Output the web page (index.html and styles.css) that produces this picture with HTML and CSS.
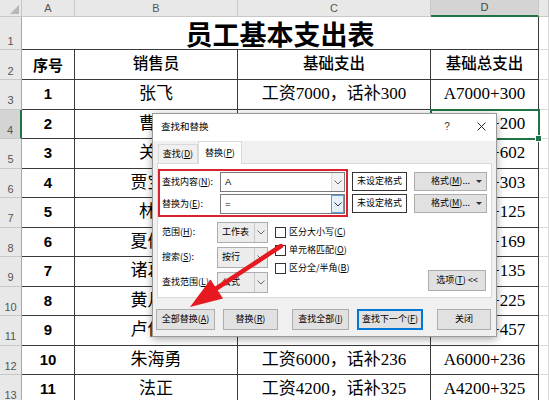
FILE: index.html
```html
<!DOCTYPE html>
<html lang="zh-CN">
<head>
<meta charset="utf-8">
<title>查找和替换</title>
<link rel="stylesheet" href="styles.css">
</head>
<body>
<div class="sheet">
  <div class="c hd corner"><span class="corner-tri"></span></div>
  <div class="c hd colh">A</div>
  <div class="c hd colh">B</div>
  <div class="c hd colh">C</div>
  <div class="c hd colh colsel">D</div>
  <div class="c hd colh"></div>

  <div class="c hd rowh">1</div>
  <div class="c title">员工基本支出表</div>
  <div class="c"></div>

  <div class="c hd rowh">2</div>
  <div class="c t num head">序号</div>
  <div class="c t txt head">销售员</div>
  <div class="c t txt head">基础支出</div>
  <div class="c t txt head">基础总支出</div>
  <div class="c"></div>

  <div class="c hd rowh">3</div>
  <div class="c t num">1</div>
  <div class="c t name">张飞</div>
  <div class="c t txt">工资7000，话补300</div>
  <div class="c t txt">A7000+300</div>
  <div class="c"></div>

  <div class="c hd rowh rowsel">4</div>
  <div class="c t num">2</div>
  <div class="c t name">曹操</div>
  <div class="c t txt">工资5000，话补200</div>
  <div class="c t txt cellsel">A5000+200</div>
  <div class="c"></div>

  <div class="c hd rowh">5</div>
  <div class="c t num">3</div>
  <div class="c t name">关羽</div>
  <div class="c t txt">工资6000，话补602</div>
  <div class="c t txt">A6000+602</div>
  <div class="c"></div>

  <div class="c hd rowh">6</div>
  <div class="c t num">4</div>
  <div class="c t name">贾宝玉</div>
  <div class="c t txt">工资4500，话补303</div>
  <div class="c t txt">A4500+303</div>
  <div class="c"></div>

  <div class="c hd rowh">7</div>
  <div class="c t num">5</div>
  <div class="c t name">林冲</div>
  <div class="c t txt">工资5500，话补125</div>
  <div class="c t txt">A5500+125</div>
  <div class="c"></div>

  <div class="c hd rowh">8</div>
  <div class="c t num">6</div>
  <div class="c t name">夏侯惇</div>
  <div class="c t txt">工资7200，话补169</div>
  <div class="c t txt">A7200+169</div>
  <div class="c"></div>

  <div class="c hd rowh">9</div>
  <div class="c t num">7</div>
  <div class="c t name">诸葛亮</div>
  <div class="c t txt">工资8000，话补135</div>
  <div class="c t txt">A8000+135</div>
  <div class="c"></div>

  <div class="c hd rowh">10</div>
  <div class="c t num">8</div>
  <div class="c t name">黄月英</div>
  <div class="c t txt">工资6500，话补225</div>
  <div class="c t txt">A6500+225</div>
  <div class="c"></div>

  <div class="c hd rowh">11</div>
  <div class="c t num">9</div>
  <div class="c t name">卢俊义</div>
  <div class="c t txt">工资5800，话补457</div>
  <div class="c t txt">A5800+457</div>
  <div class="c"></div>

  <div class="c hd rowh">12</div>
  <div class="c t num">10</div>
  <div class="c t name">朱海勇</div>
  <div class="c t txt">工资6000，话补236</div>
  <div class="c t txt">A6000+236</div>
  <div class="c"></div>

  <div class="c hd rowh">13</div>
  <div class="c t num">11</div>
  <div class="c t name">法正</div>
  <div class="c t txt">工资4200，话补325</div>
  <div class="c t txt">A4200+325</div>
  <div class="c"></div>
</div>

<div class="dialog">
  <div class="dlg-title">
    <span class="dlg-name">查找和替换</span>
    <span class="dlg-help">?</span>
    <span class="dlg-close"><svg width="9" height="9" viewBox="0 0 9 9"><path d="M0.5 0.5 L8.5 8.5 M8.5 0.5 L0.5 8.5" stroke="#222" stroke-width="1" fill="none"/></svg></span>
  </div>
  <div class="tabs">
    <span class="tab">查找(<u>D</u>)</span>
    <span class="tab active">替换(<u>P</u>)</span>
  </div>
  <div class="panel">
    <div class="find-row">
      <div class="redbox">
        <div class="field">
          <span class="lbl">查找内容(<u>N</u>):</span>
          <div class="combo"><span class="combo-val">A</span><span class="combo-arrow"><svg width="8" height="5" viewBox="0 0 8 5"><path d="M0.5 0.5 L4 4 L7.5 0.5" fill="none" stroke="#666" stroke-width="1"/></svg></span></div>
        </div>
        <div class="field">
          <span class="lbl">替换为(<u>E</u>):</span>
          <div class="combo"><span class="combo-val">=</span><span class="combo-arrow hot"><svg width="8" height="5" viewBox="0 0 8 5"><path d="M0.5 0.5 L4 4 L7.5 0.5" fill="none" stroke="#333" stroke-width="1"/></svg></span></div>
        </div>
      </div>
      <div class="fmt-col">
        <div class="fmt-box">未设定格式</div>
        <div class="fmt-box">未设定格式</div>
      </div>
      <div class="fmt-col">
        <div class="btn fmt-btn">格式(<u>M</u>)...<span class="tri"></span></div>
        <div class="btn fmt-btn">格式(<u>M</u>)...<span class="tri"></span></div>
      </div>
    </div>
    <div class="opt-row">
      <div class="sel-col">
        <div class="sel-row"><span class="lbl2">范围(<u>H</u>):</span><div class="select"><span class="sel-val">工作表</span><span class="sel-arrow"><svg width="8" height="5" viewBox="0 0 8 5"><path d="M0.5 0.5 L4 4 L7.5 0.5" fill="none" stroke="#666" stroke-width="1"/></svg></span></div></div>
        <div class="sel-row"><span class="lbl2">搜索(<u>S</u>):</span><div class="select"><span class="sel-val">按行</span><span class="sel-arrow"><svg width="8" height="5" viewBox="0 0 8 5"><path d="M0.5 0.5 L4 4 L7.5 0.5" fill="none" stroke="#666" stroke-width="1"/></svg></span></div></div>
        <div class="sel-row"><span class="lbl2">查找范围(<u>L</u>):</span><div class="select"><span class="sel-val">公式</span><span class="sel-arrow"><svg width="8" height="5" viewBox="0 0 8 5"><path d="M0.5 0.5 L4 4 L7.5 0.5" fill="none" stroke="#666" stroke-width="1"/></svg></span></div></div>
      </div>
      <div class="chk-col">
        <div class="chk"><span class="box"></span>区分大小写(<u>C</u>)</div>
        <div class="chk"><span class="box"></span>单元格匹配(<u>O</u>)</div>
        <div class="chk"><span class="box"></span>区分全/半角(<u>B</u>)</div>
      </div>
      <div class="btn opt-btn">选项(<u>T</u>) &lt;&lt;</div>
    </div>
  </div>
  <div class="actions">
    <div class="btn act w59">全部替换(<u>A</u>)</div>
    <div class="btn act w55">替换(<u>R</u>)</div>
    <div class="btn act w57 wide-gap">查找全部(<u>I</u>)</div>
    <div class="btn act w66 focus">查找下一个(<u>F</u>)</div>
    <div class="btn act w54 wide-gap">关闭</div>
  </div>
</div>

<svg class="arrow" width="549" height="400" viewBox="0 0 549 400">
  <path d="M281 246 L214 290" stroke="#e5191f" stroke-width="4.5" stroke-linecap="round" fill="none"/>
  <polygon points="190,307 210.5,279.5 223,298.5" fill="#e5191f"/>
</svg>
</body>
</html>
```

FILE: styles.css
```css
* { box-sizing: border-box; }
html, body { margin: 0; padding: 0; }
body {
  width: 549px;
  height: 400px;
  overflow: hidden;
  background: #fff;
  position: relative;
  font-family: "Noto Sans CJK SC", sans-serif;
}

/* ---------- spreadsheet ---------- */
.sheet {
  display: grid;
  grid-template-columns: 22px 53px 163px 193px 108px 10px;
  grid-template-rows: 17px 33px 30px repeat(11, 29.5px);
  height: 400px;
  overflow: hidden;
}
.c {
  position: relative;
  display: flex;
  align-items: center;
  justify-content: center;
  white-space: nowrap;
  overflow: hidden;
  line-height: 1.2;
  border-right: 1px solid #d9d9d9;
  border-bottom: 1px solid #d9d9d9;
  color: #000;
}
.hd {
  background: #e8e8e8;
  border-right: 1px solid #c8c8c8;
  border-bottom: 1px solid #c8c8c8;
  color: #555;
  font-family: "Liberation Sans", sans-serif;
  font-size: 11px;
}
.corner { justify-content: flex-end; align-items: flex-end; padding: 0 2px 2px 0; }
.corner-tri {
  width: 0; height: 0;
  border-left: 9px solid transparent;
  border-bottom: 9px solid #b8b8b8;
}
.colh { align-items: flex-end; padding-bottom: 1px; }
.colsel {
  background: #d4d4d4;
  border-bottom: 2px solid #217346;
  color: #444;
}
.rowh {
  align-items: flex-end;
  padding-bottom: 1px;
  border-right-color: #a8a8a8;
  font-size: 11px;
}
.rowsel {
  background: #d4d4d4;
  border-right: 2px solid #217346;
}
.title {
  grid-column: span 4;
  font-size: 27px;
  line-height: 1;
  font-weight: bold;
  overflow: visible;
  border-right: 1px solid #3a3a3a;
  border-bottom: 1px solid #3a3a3a;
  padding-top: 1px;
}
.t {
  border-right: 1px solid #3a3a3a;
  border-bottom: 1px solid #3a3a3a;
}
.num {
  font-family: "Liberation Sans", "Noto Sans CJK SC", sans-serif;
  font-weight: bold;
  font-size: 15px;
}
.num.head { font-family: "Noto Sans CJK SC", sans-serif; font-size: 15px; }
.name {
  font-family: "Liberation Serif", "Noto Sans CJK SC", serif;
  font-size: 17px;
}
.txt {
  font-family: "Liberation Serif", "Noto Sans CJK SC", serif;
  font-size: 17px;
}
.txt.head { font-size: 15.5px; font-weight: 500; }
.cellsel {
  outline: 2px solid #217346;
  outline-offset: -1px;
  z-index: 1;
  overflow: visible;
}
.cellsel::after {
  content: "";
  position: absolute;
  right: -4px;
  bottom: -4px;
  width: 5px;
  height: 5px;
  background: #217346;
  border: 1px solid #fff;
}

/* ---------- dialog ---------- */
.dialog {
  position: absolute;
  left: 152px;
  top: 113px;
  width: 345px;
  height: 224px;
  background: #f0f0f0;
  border: 1px solid #9a9a9a;
  box-shadow: 0 2px 8px rgba(0,0,0,0.35);
  font-size: 9px;
  line-height: 1.2;
  color: #000;
  z-index: 5;
  display: flex;
  flex-direction: column;
}
.dialog u { text-decoration: underline; text-underline-offset: 1px; }
.dlg-title {
  height: 27px;
  background: #fff;
  display: flex;
  align-items: center;
  padding: 0 10px 2px 8px;
  font-size: 9.5px;
}
.dlg-name { flex: 1; }
.dlg-help { width: 10px; margin-right: 25px; text-align: center; font-family: "Liberation Sans", sans-serif; font-size: 10px; color: #333; }
.dlg-close { display: flex; }

.tabs {
  height: 22px;
  display: flex;
  align-items: flex-end;
  padding-left: 5px;
  position: relative;
  z-index: 2;
}
.tab {
  height: 19px;
  display: flex;
  align-items: center;
  justify-content: center;
  white-space: nowrap;
  width: 40px;
  border: 1px solid #d9d9d9;
  border-bottom: none;
  background: #f0f0f0;
}
.tab.active {
  height: 23px;
  width: 44px;
  margin-bottom: -1px;
  background: #fff;
  border-color: #d9d9d9;
}

.panel {
  margin: 0 4px 0 4px;
  height: 135px;
  background: #fff;
  border: 1px solid #d9d9d9;
  padding: 5px 0 4px 0;
}
.find-row { display: flex; align-items: flex-start; }
.redbox {
  width: 190px;
  border: 2px solid #d9232e;
  padding: 1px 1px 1px 2px;
  display: flex;
  flex-direction: column;
  gap: 2px;
}
.field { display: flex; align-items: center; height: 20px; white-space: nowrap; }
.lbl { width: 58px; }
.combo {
  width: 125px;
  height: 20px;
  border: 1px solid #7a7a7a;
  display: flex;
  background: #fff;
}
.combo-val { flex: 1; padding-left: 4px; display: flex; align-items: center; font-size: 9.5px; font-family: "Liberation Sans", sans-serif; }
.combo-arrow {
  width: 13px;
  display: flex;
  align-items: center;
  justify-content: center;
  background: #f2f2f2;
  border-left: 1px solid #dcdcdc;
}
.combo-arrow.hot { background: #e5f1fb; border: 1px solid #569de5; }

.fmt-col {
  display: flex;
  flex-direction: column;
  gap: 3px;
  padding-top: 3px;
  margin-left: 4px;
}
.fmt-col + .fmt-col { margin-left: 7px; }
.fmt-box {
  width: 55px;
  height: 19px;
  border: 1px solid #333;
  background: #fff;
  display: flex;
  align-items: center;
  justify-content: center;
  white-space: nowrap;
}
.btn {
  background: #e1e1e1;
  border: 1px solid #adadad;
  display: flex;
  align-items: center;
  justify-content: center;
  white-space: nowrap;
}
.fmt-btn {
  width: 73px;
  height: 19px;
  justify-content: flex-start;
  padding-left: 16px;
}
.tri {
  margin-left: auto;
  margin-right: 4px;
  width: 0; height: 0;
  border-left: 3px solid transparent;
  border-right: 3px solid transparent;
  border-top: 3px solid #333;
}

.opt-row {
  display: flex;
  margin-top: 5px;
  height: 71px;
}
.sel-col {
  display: flex;
  flex-direction: column;
  gap: 4px;
  padding-left: 4px;
}
.sel-row { display: flex; align-items: center; height: 21px; white-space: nowrap; }
.lbl2 { width: 55px; }
.select {
  width: 51px;
  height: 21px;
  border: 1px solid #adadad;
  background: #ececec;
  display: flex;
}
.sel-val { flex: 1; padding-left: 4px; display: flex; align-items: center; }
.sel-arrow {
  width: 13px;
  border-left: 1px solid #c8c8c8;
  display: flex;
  align-items: center;
  justify-content: center;
}
.chk-col {
  display: flex;
  flex-direction: column;
  margin-left: 7px;
  padding-top: 1px;
}
.chk { height: 18px; display: flex; align-items: center; white-space: nowrap; }
.box {
  width: 11px;
  height: 11px;
  border: 1px solid #333;
  background: #fff;
  margin-right: 3px;
}
.opt-btn {
  margin-left: auto;
  margin-right: 5px;
  align-self: flex-end;
  margin-bottom: 2px;
  width: 58px;
  height: 21px;
}

.actions {
  display: flex;
  gap: 8px;
  margin-top: 11px;
  padding-left: 3px;
}
.act { height: 21px; }
.w59 { width: 59px; }
.w55 { width: 55px; }
.w57 { width: 57px; }
.w66 { width: 66px; }
.w54 { width: 54px; }
.wide-gap { margin-left: 6px; }
.focus { border: 2px solid #0078d7; }

.arrow {
  position: absolute;
  left: 0;
  top: 0;
  z-index: 10;
  pointer-events: none;
}
```
